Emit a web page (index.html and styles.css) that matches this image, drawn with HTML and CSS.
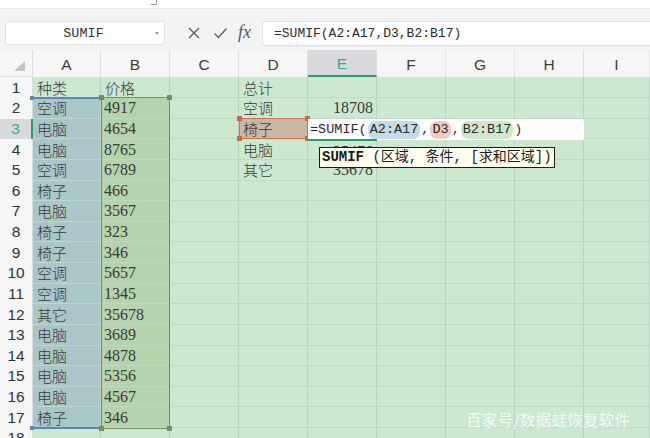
FILE: index.html
```html
<!DOCTYPE html>
<html lang="zh">
<head>
<meta charset="utf-8">
<title>SUMIF</title>
<link rel="stylesheet" href="styles.css">
</head>
<body>
<div class="app">
  <div class="topstrip"><span class="corner"></span></div>
  <div class="toolbar">
    <div class="namebox"><span class="name">SUMIF</span><span class="caret"></span></div>
    <svg class="ico-x" width="12" height="12" viewBox="0 0 12 12"><path d="M1 1L11 11M11 1L1 11" stroke="#5a5a5a" stroke-width="1.3" fill="none"/></svg>
    <svg class="ico-ok" width="15" height="12" viewBox="0 0 15 12"><path d="M1.5 6.5L5.5 10.5L13.5 1.5" stroke="#5a5a5a" stroke-width="1.3" fill="none"/></svg>
    <span class="fx">fx</span>
    <div class="formula">=SUMIF(A2:A17,D3,B2:B17)</div>
  </div>
  <div class="sheet">
    <div class="row hdr">
      <div class="all"><span class="tri"></span></div>
      <div class="ch">A</div><div class="ch">B</div><div class="ch">C</div><div class="ch">D</div><div class="ch act">E</div><div class="ch">F</div><div class="ch">G</div><div class="ch">H</div><div class="ch">I</div>
    </div>
    <div class="row r1">
      <div class="rh">1</div><div class="c t">种类</div><div class="c t">价格</div><div class="c"></div><div class="c t">总计</div><div class="c"></div><div class="c"></div><div class="c"></div><div class="c"></div><div class="c"></div>
    </div>
    <div class="row">
      <div class="rh">2</div><div class="c t sa">空调</div><div class="c n sb">4917</div><div class="c"></div><div class="c t">空调</div><div class="c n r">18708</div><div class="c"></div><div class="c"></div><div class="c"></div><div class="c"></div>
    </div>
    <div class="row">
      <div class="rh act">3</div><div class="c t sa">电脑</div><div class="c n sb">4654</div><div class="c"></div><div class="c t sd">椅子</div><div class="c"></div><div class="c"></div><div class="c"></div><div class="c"></div><div class="c"></div>
    </div>
    <div class="row">
      <div class="rh">4</div><div class="c t sa">电脑</div><div class="c n sb">8765</div><div class="c"></div><div class="c t">电脑</div><div class="c n r low">35476</div><div class="c"></div><div class="c"></div><div class="c"></div><div class="c"></div>
    </div>
    <div class="row">
      <div class="rh">5</div><div class="c t sa">空调</div><div class="c n sb">6789</div><div class="c"></div><div class="c t">其它</div><div class="c n r">35678</div><div class="c"></div><div class="c"></div><div class="c"></div><div class="c"></div>
    </div>
    <div class="row">
      <div class="rh">6</div><div class="c t sa">椅子</div><div class="c n sb">466</div><div class="c"></div><div class="c"></div><div class="c"></div><div class="c"></div><div class="c"></div><div class="c"></div><div class="c"></div>
    </div>
    <div class="row">
      <div class="rh">7</div><div class="c t sa">电脑</div><div class="c n sb">3567</div><div class="c"></div><div class="c"></div><div class="c"></div><div class="c"></div><div class="c"></div><div class="c"></div><div class="c"></div>
    </div>
    <div class="row">
      <div class="rh">8</div><div class="c t sa">椅子</div><div class="c n sb">323</div><div class="c"></div><div class="c"></div><div class="c"></div><div class="c"></div><div class="c"></div><div class="c"></div><div class="c"></div>
    </div>
    <div class="row">
      <div class="rh">9</div><div class="c t sa">椅子</div><div class="c n sb">346</div><div class="c"></div><div class="c"></div><div class="c"></div><div class="c"></div><div class="c"></div><div class="c"></div><div class="c"></div>
    </div>
    <div class="row">
      <div class="rh">10</div><div class="c t sa">空调</div><div class="c n sb">5657</div><div class="c"></div><div class="c"></div><div class="c"></div><div class="c"></div><div class="c"></div><div class="c"></div><div class="c"></div>
    </div>
    <div class="row">
      <div class="rh">11</div><div class="c t sa">空调</div><div class="c n sb">1345</div><div class="c"></div><div class="c"></div><div class="c"></div><div class="c"></div><div class="c"></div><div class="c"></div><div class="c"></div>
    </div>
    <div class="row">
      <div class="rh">12</div><div class="c t sa">其它</div><div class="c n sb">35678</div><div class="c"></div><div class="c"></div><div class="c"></div><div class="c"></div><div class="c"></div><div class="c"></div><div class="c"></div>
    </div>
    <div class="row">
      <div class="rh">13</div><div class="c t sa">电脑</div><div class="c n sb">3689</div><div class="c"></div><div class="c"></div><div class="c"></div><div class="c"></div><div class="c"></div><div class="c"></div><div class="c"></div>
    </div>
    <div class="row">
      <div class="rh">14</div><div class="c t sa">电脑</div><div class="c n sb">4878</div><div class="c"></div><div class="c"></div><div class="c"></div><div class="c"></div><div class="c"></div><div class="c"></div><div class="c"></div>
    </div>
    <div class="row">
      <div class="rh">15</div><div class="c t sa">电脑</div><div class="c n sb">5356</div><div class="c"></div><div class="c"></div><div class="c"></div><div class="c"></div><div class="c"></div><div class="c"></div><div class="c"></div>
    </div>
    <div class="row">
      <div class="rh">16</div><div class="c t sa">电脑</div><div class="c n sb">4567</div><div class="c"></div><div class="c"></div><div class="c"></div><div class="c"></div><div class="c"></div><div class="c"></div><div class="c"></div>
    </div>
    <div class="row">
      <div class="rh">17</div><div class="c t sa">椅子</div><div class="c n sb">346</div><div class="c"></div><div class="c"></div><div class="c"></div><div class="c"></div><div class="c"></div><div class="c"></div><div class="c"></div>
    </div>
    <div class="row">
      <div class="rh">18</div><div class="c"></div><div class="c"></div><div class="c"></div><div class="c"></div><div class="c"></div><div class="c"></div><div class="c"></div><div class="c"></div><div class="c"></div>
    </div>

    <div class="ref-a"><i class="h tl"></i><i class="h tr"></i><i class="h bl"></i><i class="h br"></i></div>
    <div class="ref-b"><i class="h tl"></i><i class="h tr"></i><i class="h bl"></i><i class="h br"></i></div>
    <div class="ref-d"><i class="h tl"></i><i class="h tr"></i><i class="h bl"></i><i class="h br"></i></div>
    <div class="editor">=SUMIF(<span class="chip blue">A2:A17</span>,<span class="chip red">D3</span>,<span class="chip green">B2:B17</span>)</div>
    <div class="tip"><b>SUMIF</b> (区域, 条件, [求和区域])</div>
  </div>
  <div class="watermark">百家号/数据蛙恢复软件</div>
</div>
</body>
</html>
```

FILE: styles.css
```css
html, body {
  margin: 0;
  padding: 0;
  background: #ffffff;
}
.app {
  width: 650px;
  height: 438px;
  overflow: hidden;
  position: relative;
  font-family: "Liberation Sans", "Noto Sans CJK SC", sans-serif;
}
.topstrip {
  height: 9px;
  background: #ffffff;
  border-bottom: 1px solid #e6e6e6;
  box-sizing: border-box;
  position: relative;
}
.corner {
  position: absolute;
  left: 151px;
  top: 0;
  width: 5px;
  height: 4px;
  border-right: 1px solid #9a9a9a;
  border-bottom: 1px solid #9a9a9a;
}
.toolbar {
  height: 41px;
  box-sizing: border-box;
  background: #f3f3f3;
  display: flex;
  align-items: center;
  padding: 0 0 0 5px;
}
.namebox {
  width: 160px;
  height: 24px;
  box-sizing: border-box;
  margin-top: 7px;
  background: #ffffff;
  border: 1px solid #e2e2e2;
  border-radius: 3px;
  display: flex;
  align-items: center;
  position: relative;
}
.name {
  flex: 1;
  text-align: center;
  font-family: "Liberation Mono", monospace;
  font-size: 13.5px;
  color: #333;
  padding-left: 6px;
}
.caret {
  width: 0;
  height: 0;
  border-left: 2px solid transparent;
  border-right: 2px solid transparent;
  border-top: 3px solid #9a9a9a;
  margin-right: 5px;
}
.ico-x { margin: 7px 0 0 23px; }
.ico-ok { margin: 7px 0 0 13px; }
.fx {
  margin: 5px 0 0 10px;
  font-family: "Liberation Serif", serif;
  font-style: italic;
  font-size: 18px;
  color: #5a5a5a;
  width: 16px;
}
.formula {
  flex: 1;
  margin: 7px 0 0 8px;
  height: 25px;
  box-sizing: border-box;
  background: #ffffff;
  border: 1px solid #e0e0e0;
  border-right: none;
  border-radius: 3px 0 0 3px;
  padding-left: 11px;
  font-family: "Liberation Mono", monospace;
  font-size: 13px;
  line-height: 23px;
  color: #2a2a2a;
}

.sheet {
  position: relative;
  background: #cce8cf;
}
.row {
  display: grid;
  grid-template-columns: 33px 68px 69px 69px 69px 69px 69px 69px 69px 66px;
  height: 20.625px;
}
.row.hdr { height: 27px; background: #f6f6f6; }
.row.r1 { height: 21px; }

.all {
  position: relative;
  border-right: 1px solid #dedede;
  border-bottom: 1px solid #dedede;
}
.tri {
  position: absolute;
  right: 7px;
  bottom: 5px;
  width: 0;
  height: 0;
  border-left: 11px solid transparent;
  border-bottom: 10px solid #c4c4c4;
}
.ch {
  display: flex;
  align-items: center;
  justify-content: center;
  border-right: 1px solid #e0e0e0;
  font-size: 15.5px;
  color: #3c3c3c;
  padding-top: 2px;
  box-sizing: border-box;
}
.ch.act {
  background: #d8dadd;
  color: #3aa58c;
  border-bottom: 2px solid #2f9a6c;
}
.rh {
  display: flex;
  align-items: center;
  justify-content: center;
  background: #f6f6f6;
  border-right: 1px solid #dcdcdc;
  font-size: 15.5px;
  color: #333;
}
.rh.act {
  background: #d8dadd;
  color: #3aa58c;
  border-right: 2px solid #2f9a6c;
}
.c {
  box-sizing: border-box;
  border-right: 1px solid #b9d1c9;
  border-bottom: 1px solid #bfd7c6;
  display: flex;
  align-items: center;
  padding-left: 3px;
  white-space: nowrap;
  overflow: hidden;
  color: #3a3a3a;
}
.t {
  font-family: "Noto Sans CJK SC", sans-serif;
  font-size: 15px;
  font-weight: 300;
  padding-left: 4px;
}
.n {
  font-family: "Liberation Serif", serif;
  font-size: 16px;
  padding-top: 1px;
}
.r {
  justify-content: flex-end;
  padding-right: 3px;
}
.low { padding-top: 6px; }
.sa { background: #a9c7c8; }
.sb { background: #b5d3ac; }
.sd { background: #c9b8a3; }

/* reference range highlights */
.ref-a, .ref-b, .ref-d {
  position: absolute;
  box-sizing: border-box;
  pointer-events: none;
}
.ref-a {
  left: 33px;
  top: 47px;
  width: 68px;
  height: 331.5px;
  border-top: 2px solid #5b86c4;
  border-bottom: 2px solid #5b86c4;
}
.ref-b {
  left: 101px;
  top: 47px;
  width: 69px;
  height: 331.5px;
  border: 1.5px solid #6e8f62;
}
.ref-d {
  left: 239px;
  top: 68px;
  width: 69px;
  height: 21px;
  border: 1.5px solid #d0704e;
}
.h {
  position: absolute;
  width: 5px;
  height: 5px;
  background: #6e8f62;
}
.ref-a .h { background: #5b86c4; width: 4px; height: 4px; }
.ref-d .h { background: #c9684a; }
.tl { left: -3px; top: -3px; }
.tr { right: -3px; top: -3px; }
.bl { left: -3px; bottom: -3px; }
.br { right: -3px; bottom: -3px; }

.editor {
  position: absolute;
  left: 308px;
  top: 68.5px;
  width: 276px;
  height: 21.5px;
  box-sizing: border-box;
  background: #ffffff;
  padding-left: 2px;
  font-family: "Liberation Mono", monospace;
  font-size: 13.5px;
  line-height: 21px;
  color: #2a2a2a;
  white-space: nowrap;
}
.editor::after {
  content: "";
  position: absolute;
  left: 0;
  bottom: -1px;
  width: 69px;
  height: 2px;
  background: #2f9a6c;
}
.chip {
  display: inline-block;
  line-height: 18px;
  padding: 0 2px;
  margin: 0 1px;
  border-radius: 7px;
}
.chip.blue { background: #c6dbe9; }
.chip.red { background: #f1c9c9; }
.chip.green { background: #d3e6cd; }

.tip {
  position: absolute;
  left: 319px;
  top: 97px;
  width: 236px;
  height: 21px;
  box-sizing: border-box;
  border: 1px solid #1a1a1a;
  background: #fffff0;
  padding-left: 2px;
  font-family: "Liberation Mono", "Noto Sans CJK SC", monospace;
  font-size: 14px;
  line-height: 19px;
  color: #1a1a1a;
  white-space: nowrap;
  overflow: hidden;
}
.tip b { font-weight: 700; }

.watermark {
  position: absolute;
  left: 466px;
  top: 408px;
  font-family: "Noto Sans CJK SC", sans-serif;
  font-size: 15.5px;
  color: rgba(255, 255, 255, 0.8);
  letter-spacing: 0.3px;
}
```
